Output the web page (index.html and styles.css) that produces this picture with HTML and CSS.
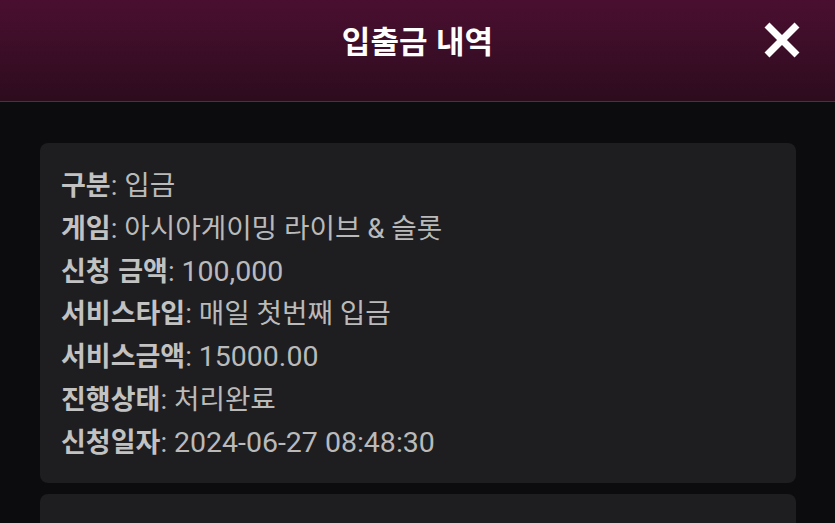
FILE: index.html
```html
<!DOCTYPE html>
<html lang="ko">
<head>
<meta charset="utf-8">
<link rel="stylesheet" href="styles.css">
</head>
<body>
<header class="top">
  <h1 class="title">입출금 내역</h1>
  <button class="close" aria-label="닫기">
    <svg width="38" height="36" viewBox="0 0 38 36"><path d="M4 3 L34 33 M34 3 L4 33" stroke="#fff" stroke-width="7" stroke-linecap="butt"/></svg>
  </button>
</header>
<main class="list">
  <section class="card">
    <p class="row"><b>구분</b>: 입금</p>
    <p class="row"><b>게임</b>: 아시아게이밍 라이브 &amp; 슬롯</p>
    <p class="row"><b>신청 금액</b>: <span class="num">100,000</span></p>
    <p class="row"><b>서비스타입</b>: 매일 첫번째 입금</p>
    <p class="row"><b>서비스금액</b>: <span class="num">15000.00</span></p>
    <p class="row"><b>진행상태</b>: 처리완료</p>
    <p class="row"><b>신청일자</b>: <span class="num">2024-06-27 08:48:30</span></p>
  </section>
  <section class="card">
    <p class="row"><b>구분</b>: 입금</p>
    <p class="row"><b>게임</b>: 아시아게이밍 라이브 &amp; 슬롯</p>
  </section>
</main>
</body>
</html>
```
FILE: styles.css
```css
* { box-sizing: border-box; }
html, body { margin: 0; padding: 0; }
body {
  background: #0c0c0e;
  font-family: Roboto, "Noto Sans CJK KR", sans-serif;
  width: 835px;
  height: 523px;
  overflow: hidden;
}
.top {
  position: relative;
  height: 102px;
  background: linear-gradient(#4a0f30, #2d0c1e);
  border-bottom: 1px solid #3c3a3c;
  display: flex;
  justify-content: center;
  padding-top: 19px;
}
.title {
  margin: 0;
  color: #fff;
  font-family: "Noto Sans CJK KR", sans-serif;
  font-weight: 700;
  font-size: 31px;
  line-height: 42px;
  height: 42px;
}
.close {
  position: absolute;
  right: 34px;
  top: 22px;
  background: none;
  border: 0;
  padding: 0;
  width: 38px;
  height: 36px;
}
.close svg { display: block; }
.list {
  padding: 41px 39px 0 40px;
  display: flex;
  flex-direction: column;
  gap: 11px;
}
.card {
  background: #1e1e21;
  border-radius: 8px;
  padding: 20px 21px;
}
.row {
  margin: 0;
  height: 42.8px;
  font-size: 27.7px;
  line-height: 42.8px;
  color: #bababa;
  white-space: nowrap;
}
.row b {
  font-family: "Noto Sans CJK KR", sans-serif;
  font-weight: 700;
  font-size: 27px;
  color: #c2c2c2;
}
.num {
  font-size: 28.5px;
}
```
